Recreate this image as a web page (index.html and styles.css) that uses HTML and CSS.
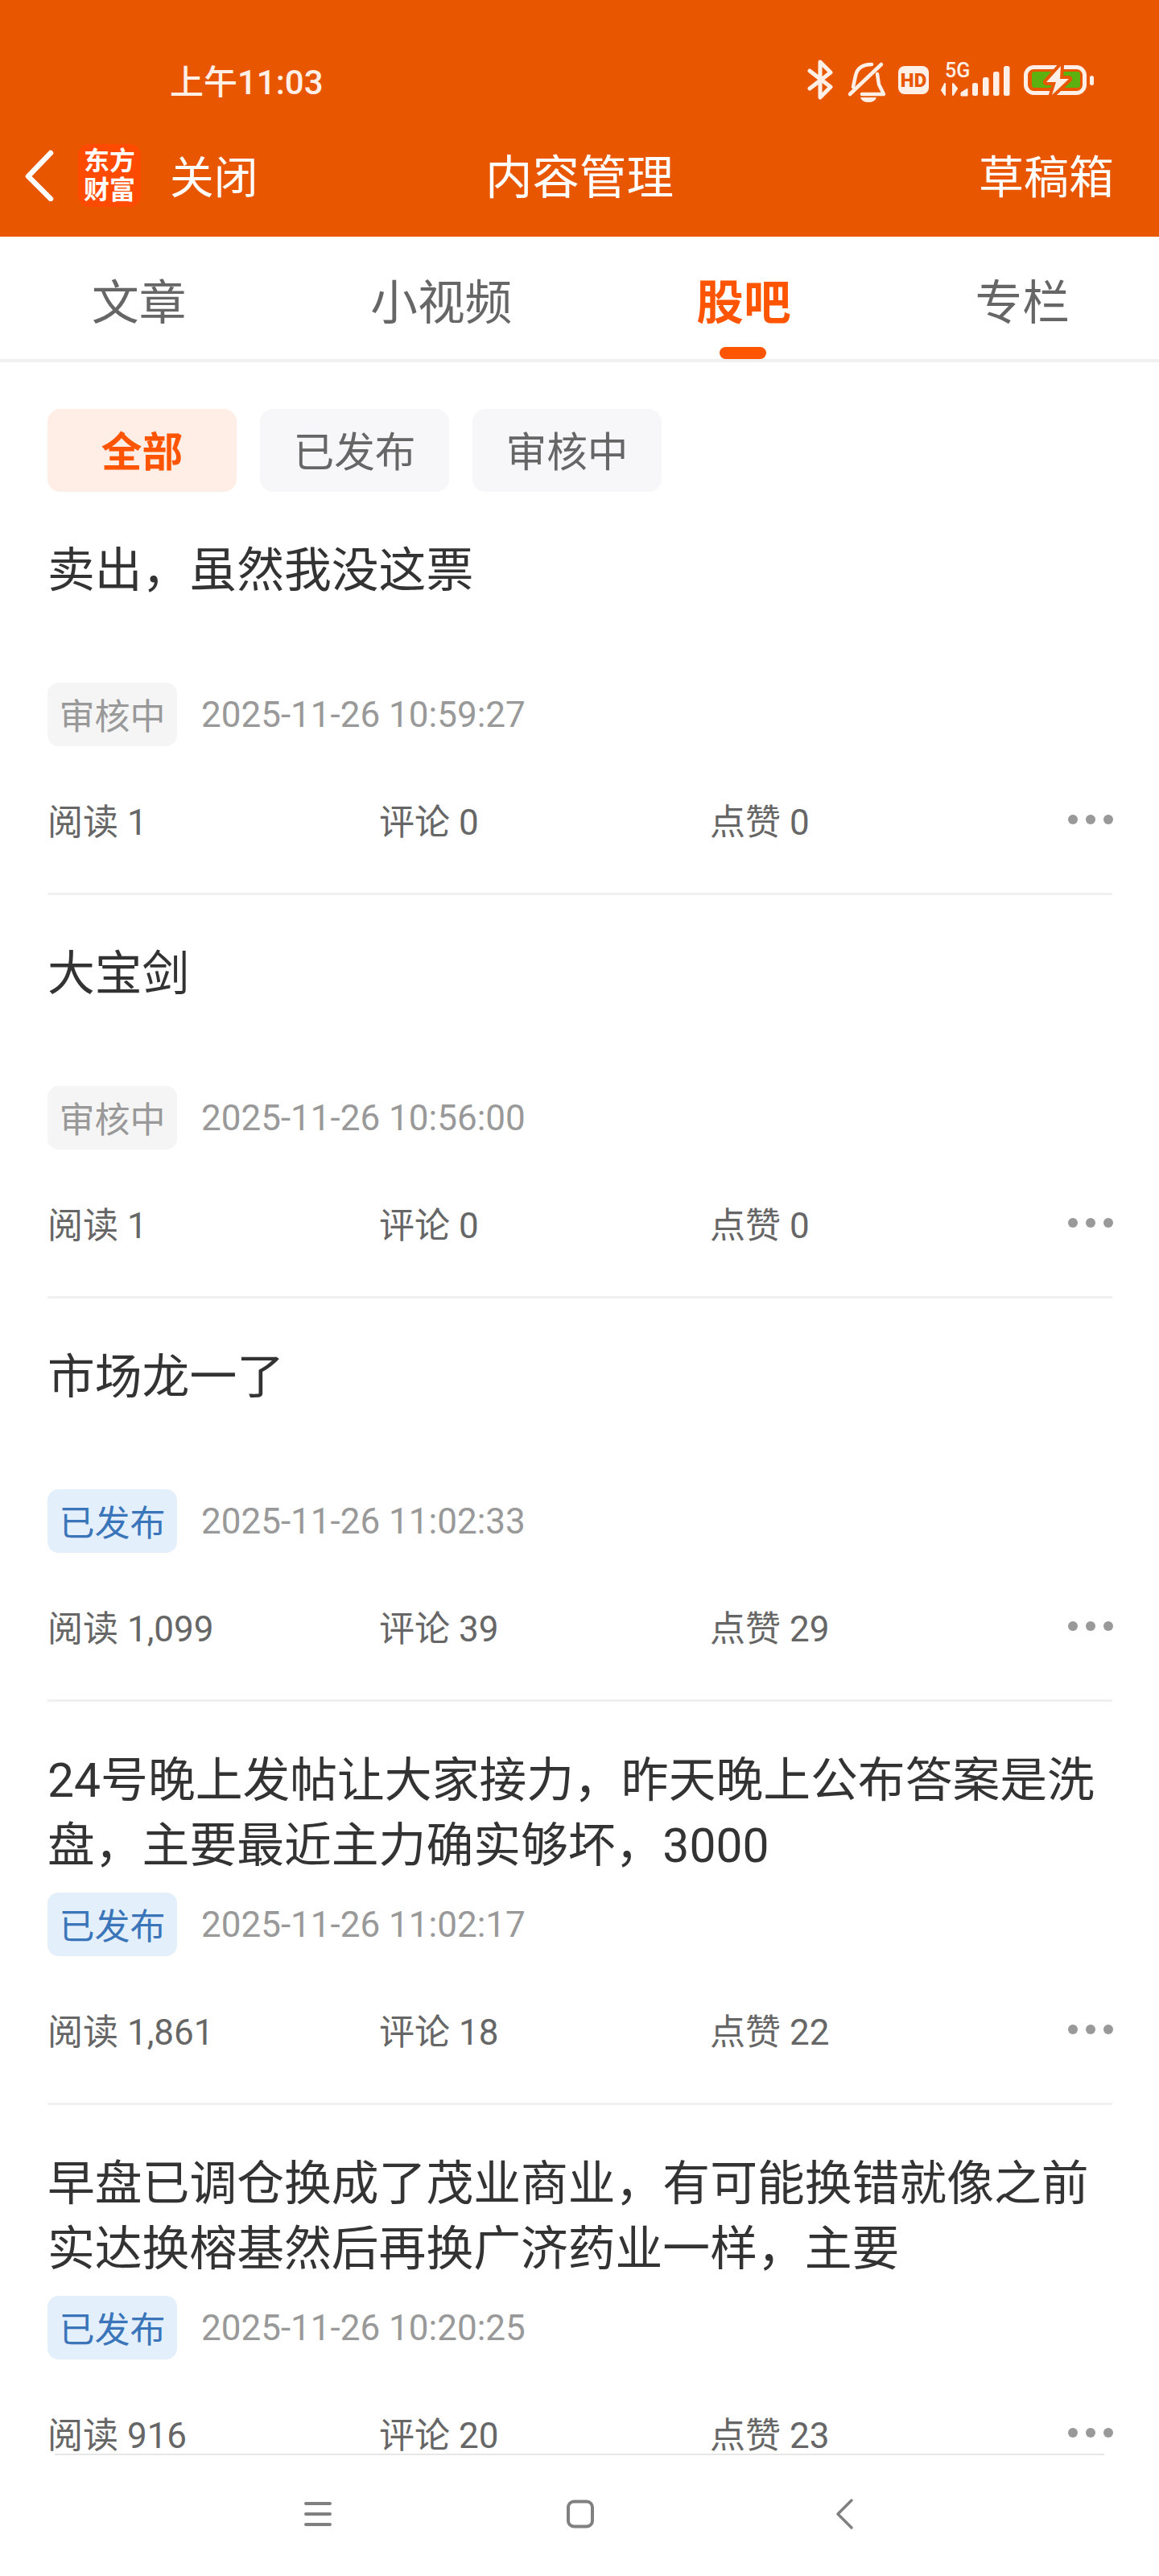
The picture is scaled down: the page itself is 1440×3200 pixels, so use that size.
FILE: index.html
```html
<!DOCTYPE html>
<html lang="zh-CN">
<head>
    <meta charset="UTF-8">
    <meta name="viewport" content="width=device-width, initial-scale=1.0">
    <title>内容管理</title>
    <link rel="stylesheet" href="styles.css">
</head>
<body>
<div class="app">
    <header class="topbar">
        <div class="status">
            <span class="time">上午11:03</span>
            <svg class="status-icons" width="362" height="60" viewBox="1000 70 362 60">
                <!-- bluetooth -->
                <path d="M1006 88 L1032 108 L1019 121 V77 L1032 90 L1006 110" fill="none" stroke="#ffefe6" stroke-width="5" stroke-linecap="round" stroke-linejoin="round"/>
                <!-- muted bell -->
                <g fill="none" stroke="#ffefe6" stroke-width="4.5" stroke-linecap="round" stroke-linejoin="round">
                    <path d="M1056 117 L1095 80"/>
                    <path d="M1060 108 L1063 94 Q1066 80 1083 80"/>
                    <path d="M1090 92 L1092 105 L1098 117 L1071 117"/>
                </g>
                <path d="M1069 121 H1089 Q1087 127 1079 127 Q1071 127 1069 121 Z" fill="#ffefe6"/>
                <!-- hd call -->
                <rect x="1116" y="82" width="38" height="35" rx="8" fill="#ffefe6"/>
                <text x="1135" y="108" class="hd-label">HD</text>
                <!-- 5g and signal -->
                <text x="1174" y="96" class="net-label">5G</text>
                <path d="M1174 104 V118 L1170 112 Z M1184 118 V104 L1189 110 Z" fill="#ffefe6" stroke="#ffefe6" stroke-width="2" stroke-linejoin="round"/>
                <path d="M1194 119 V115 L1202 110 V119 Z" fill="#ffefe6" stroke="#ffefe6" stroke-width="1" stroke-linejoin="round"/>
                <rect x="1208" y="103" width="7" height="16" rx="2.5" fill="#ffefe6"/>
                <rect x="1221" y="96" width="7.5" height="23" rx="2.5" fill="#ffefe6"/>
                <rect x="1234" y="89" width="7.5" height="30" rx="2.5" fill="#ffefe6"/>
                <rect x="1247" y="82" width="7.5" height="37" rx="2.5" fill="#ffefe6"/>
                <!-- charging battery -->
                <rect x="1274.5" y="83.5" width="73" height="32" rx="10" fill="none" stroke="#ffefe6" stroke-width="5"/>
                <rect x="1282" y="89" width="60" height="20" rx="3" fill="#5cb010"/>
                <rect x="1354" y="94" width="5" height="12" rx="2.5" fill="#ffefe6"/>
                <path d="M1318 82 L1300 102 L1312 102 L1307 118 L1328 98 L1317 98 Z" fill="#ffefe6" stroke="#e85700" stroke-width="8" stroke-linejoin="round" paint-order="stroke"/>
            </svg>
        </div>
        <div class="nav">
            <div class="nav-left">
                <svg class="back" width="44" height="64" viewBox="0 0 44 64">
                    <path d="M36 4 L8 33 L36 61" fill="none" stroke="#fff" stroke-width="6.5" stroke-linecap="round" stroke-linejoin="round"/>
                </svg>
                <div class="logo">东方<br>财富</div>
                <span class="close">关闭</span>
            </div>
            <div class="nav-title">内容管理</div>
            <div class="nav-right">草稿箱</div>
        </div>
    </header>

    <nav class="tabs">
        <a class="tab">文章</a>
        <a class="tab">小视频</a>
        <a class="tab active">股吧</a>
        <a class="tab">专栏</a>
    </nav>

    <main class="content">
        <div class="filters">
            <span class="chip active">全部</span>
            <span class="chip">已发布</span>
            <span class="chip">审核中</span>
        </div>

        <article class="post">
            <h3 class="post-title">卖出，虽然我没这票</h3>
            <div class="post-meta">
                <span class="tag pending">审核中</span>
                <span class="date">2025-11-26 10:59:27</span>
            </div>
            <div class="stats">
                <span>阅读 1</span>
                <span>评论 0</span>
                <span>点赞 0</span>
                <span class="more"><i></i><i></i><i></i></span>
            </div>
        </article>

        <article class="post">
            <h3 class="post-title">大宝剑</h3>
            <div class="post-meta">
                <span class="tag pending">审核中</span>
                <span class="date">2025-11-26 10:56:00</span>
            </div>
            <div class="stats">
                <span>阅读 1</span>
                <span>评论 0</span>
                <span>点赞 0</span>
                <span class="more"><i></i><i></i><i></i></span>
            </div>
        </article>

        <article class="post">
            <h3 class="post-title">市场龙一了</h3>
            <div class="post-meta">
                <span class="tag published">已发布</span>
                <span class="date">2025-11-26 11:02:33</span>
            </div>
            <div class="stats">
                <span>阅读 1,099</span>
                <span>评论 39</span>
                <span>点赞 29</span>
                <span class="more"><i></i><i></i><i></i></span>
            </div>
        </article>

        <article class="post">
            <h3 class="post-title">24号晚上发帖让大家接力，昨天晚上公布答案是洗盘，主要最近主力确实够坏，3000</h3>
            <div class="post-meta">
                <span class="tag published">已发布</span>
                <span class="date">2025-11-26 11:02:17</span>
            </div>
            <div class="stats">
                <span>阅读 1,861</span>
                <span>评论 18</span>
                <span>点赞 22</span>
                <span class="more"><i></i><i></i><i></i></span>
            </div>
        </article>

        <article class="post">
            <h3 class="post-title">早盘已调仓换成了茂业商业，有可能换错就像之前实达换榕基然后再换广济药业一样，主要</h3>
            <div class="post-meta">
                <span class="tag published">已发布</span>
                <span class="date">2025-11-26 10:20:25</span>
            </div>
            <div class="stats">
                <span>阅读 916</span>
                <span>评论 20</span>
                <span>点赞 23</span>
                <span class="more"><i></i><i></i><i></i></span>
            </div>
        </article>
    </main>

    <footer class="softkeys">
        <svg width="40" height="40" viewBox="0 0 40 40">
            <path d="M7 7 H37 M7 20 H37 M7 33 H37" stroke="#808080" stroke-width="4" stroke-linecap="round"/>
        </svg>
        <svg width="40" height="40" viewBox="0 0 40 40">
            <rect x="5" y="4.5" width="30" height="31" rx="7" fill="none" stroke="#808080" stroke-width="4"/>
        </svg>
        <svg width="40" height="40" viewBox="0 0 40 40">
            <path d="M29 3 L12 20 L29 37" fill="none" stroke="#808080" stroke-width="3.5" stroke-linecap="round" stroke-linejoin="round"/>
        </svg>
    </footer>
</div>
</body>
</html>
```

FILE: styles.css
```css
* {
    box-sizing: border-box;
}
body {
    margin: 0;
    background-color: #fff;
    font-family: Roboto, "Noto Sans CJK SC", sans-serif;
}
.app {
    display: flex;
    flex-direction: column;
    width: 1440px;
    height: 3200px;
    overflow: hidden;
}

/* orange top area */
.topbar {
    height: 294px;
    padding-top: 70px;
    background-color: #e85700;
    color: #fff;
}
.status {
    display: flex;
    align-items: center;
    justify-content: space-between;
    height: 60px;
    padding-left: 211px;
    padding-right: 78px;
}
.time {
    padding-bottom: 3px;
    font-size: 42px;
    font-weight: 500;
    color: #ffefe6;
}
.hd-label {
    font-family: Roboto, sans-serif;
    font-size: 24px;
    font-weight: 900;
    fill: #e85700;
    text-anchor: middle;
}
.net-label {
    font-family: Roboto, sans-serif;
    font-size: 25px;
    font-weight: 500;
    fill: #ffefe6;
}
.nav {
    display: grid;
    grid-template-columns: 1fr auto 1fr;
    align-items: center;
    height: 100px;
    margin-top: 38px;
}
.nav-left {
    display: flex;
    align-items: center;
    padding-left: 27px;
}
.logo {
    width: 78px;
    height: 78px;
    margin-left: 26px;
    margin-right: 36px;
    padding-top: 3px;
    border-radius: 14px;
    background-color: #ff4a00;
    font-size: 32px;
    font-weight: 700;
    line-height: 36px;
    text-align: center;
}
.close {
    padding-bottom: 4px;
    font-size: 54.67px;
}
.nav-title {
    padding-bottom: 6px;
    font-size: 58.5px;
}
.nav-right {
    padding-right: 56px;
    padding-bottom: 6px;
    font-size: 56px;
    text-align: right;
}

/* section tabs */
.tabs {
    display: flex;
    gap: 229px;
    height: 156px;
    padding: 43px 0 0 114px;
    border-bottom: 4px solid #f0f0f0;
}
.tab {
    position: relative;
    height: 109px;
    font-size: 58.67px;
    line-height: 80px;
    color: #666;
}
.tab.active {
    font-weight: 700;
    color: #ff5500;
}
.tab.active::after {
    content: "";
    position: absolute;
    left: 29px;
    bottom: 0;
    width: 58px;
    height: 15px;
    border-radius: 8px;
    background-color: #ff5500;
}

.content {
    flex: 1;
    min-height: 0;
}
.filters {
    display: flex;
    gap: 29px;
    padding: 58px 59px 0;
}
.chip {
    width: 235px;
    height: 103px;
    border-radius: 16px;
    background-color: #f7f7f9;
    font-size: 50.67px;
    line-height: 109px;
    text-align: center;
    color: #666;
}
.chip.active {
    background-color: #ffeee6;
    font-weight: 700;
    color: #ff5500;
}

/* post rows */
.post {
    height: 501px;
    margin: 0 58px 0 59px;
    padding-top: 57px;
    border-bottom: 3px solid #f0f0f0;
}
.post:last-child {
    height: auto;
    border-bottom: none;
}
.post-title {
    min-height: 162px;
    margin: 0 0 18px;
    font-size: 58.8px;
    font-weight: 400;
    line-height: 81px;
    color: #333;
}
.post-meta {
    display: flex;
    align-items: center;
    height: 79px;
}
.tag {
    width: 161px;
    height: 79px;
    border-radius: 14px;
    font-size: 44px;
    line-height: 87px;
    text-align: center;
}
.tag.pending {
    background-color: #f5f5f5;
    color: #999;
}
.tag.published {
    background-color: #e3effb;
    color: #3a75ba;
}
.date {
    margin-left: 30px;
    font-size: 44px;
    color: #999;
}
.stats {
    display: grid;
    grid-template-columns: 412px 411px 1fr auto;
    align-items: center;
    height: 44px;
    margin-top: 73px;
    font-size: 44px;
    line-height: 44px;
    color: #666;
}
.more {
    display: flex;
    gap: 10px;
    margin-right: -1px;
    margin-bottom: 8px;
}
.more i {
    width: 12px;
    height: 12px;
    border-radius: 50%;
    background-color: #999;
}

/* system buttons */
.softkeys {
    display: flex;
    justify-content: center;
    align-items: center;
    gap: 288px;
    height: 152px;
    margin: 0 68px;
    padding-left: 2px;
    padding-bottom: 4px;
    border-top: 2px solid #e6e6e6;
}
```
